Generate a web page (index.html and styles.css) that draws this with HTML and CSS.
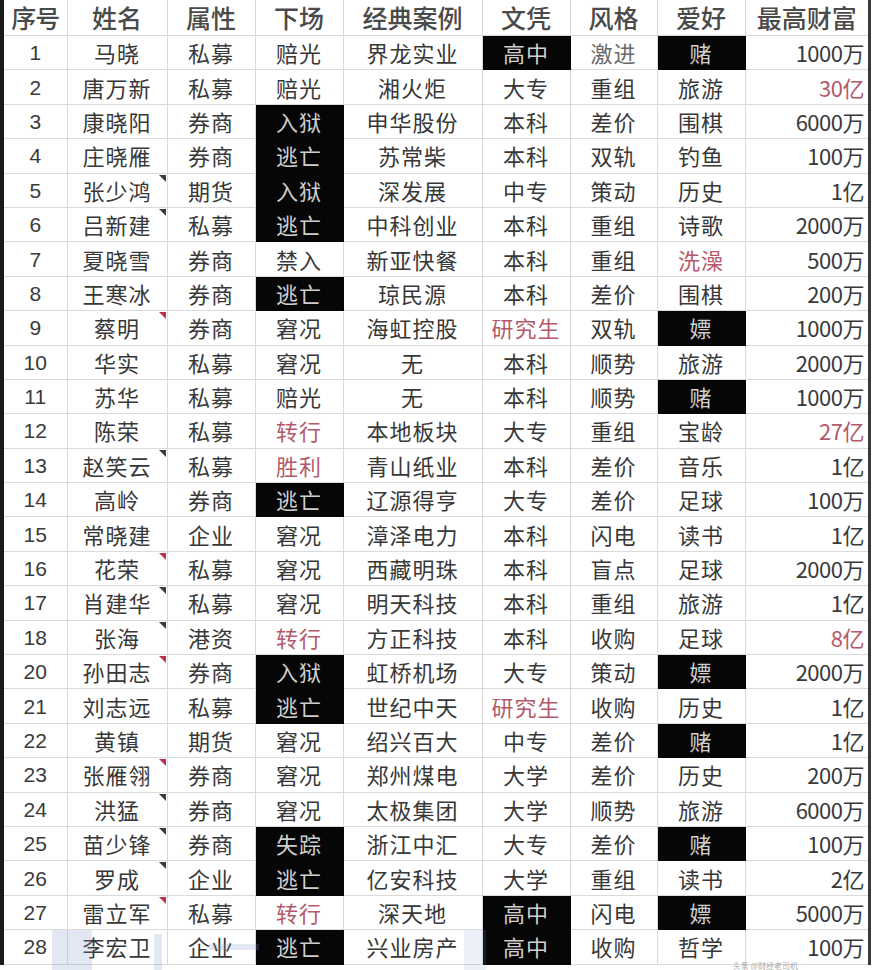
FILE: index.html
```html
<!DOCTYPE html>
<html lang="zh">
<head>
<meta charset="utf-8">
<link rel="stylesheet" href="styles.css">
</head>
<body>
<div class="sheet">
<table class="grid">
<colgroup>
<col class="c-no"><col class="c-name"><col class="c-type"><col class="c-end"><col class="c-case"><col class="c-edu"><col class="c-style"><col class="c-hobby"><col class="c-max">
</colgroup>
<thead>
<tr><th>序号</th><th>姓名</th><th>属性</th><th>下场</th><th>经典案例</th><th>文凭</th><th>风格</th><th>爱好</th><th>最高财富</th></tr>
</thead>
<tbody>
<tr><td class="no">1</td><td>马晓</td><td>私募</td><td>赔光</td><td>界龙实业</td><td class="blk">高中</td><td class="lt">激进</td><td class="blk">赌</td><td class="num">1000万</td></tr>
<tr><td class="no">2</td><td>唐万新</td><td>私募</td><td>赔光</td><td>湘火炬</td><td>大专</td><td>重组</td><td>旅游</td><td class="num red">30亿</td></tr>
<tr><td class="no">3</td><td>康晓阳</td><td>券商</td><td class="blk">入狱</td><td>申华股份</td><td>本科</td><td>差价</td><td>围棋</td><td class="num">6000万</td></tr>
<tr><td class="no">4</td><td>庄晓雁</td><td>券商</td><td class="blk">逃亡</td><td>苏常柴</td><td>本科</td><td>双轨</td><td>钓鱼</td><td class="num">100万</td></tr>
<tr><td class="no">5</td><td class="note">张少鸿</td><td>期货</td><td class="blk">入狱</td><td>深发展</td><td>中专</td><td>策动</td><td>历史</td><td class="num">1亿</td></tr>
<tr><td class="no">6</td><td class="note">吕新建</td><td>私募</td><td class="blk">逃亡</td><td>中科创业</td><td>本科</td><td>重组</td><td>诗歌</td><td class="num">2000万</td></tr>
<tr><td class="no">7</td><td>夏晓雪</td><td>券商</td><td>禁入</td><td>新亚快餐</td><td>本科</td><td>重组</td><td class="red">洗澡</td><td class="num">500万</td></tr>
<tr><td class="no">8</td><td>王寒冰</td><td>券商</td><td class="blk">逃亡</td><td>琼民源</td><td>本科</td><td>差价</td><td>围棋</td><td class="num">200万</td></tr>
<tr><td class="no">9</td><td class="note rednote">蔡明</td><td>券商</td><td>窘况</td><td>海虹控股</td><td class="red">研究生</td><td>双轨</td><td class="blk">嫖</td><td class="num">1000万</td></tr>
<tr><td class="no">10</td><td>华实</td><td>私募</td><td>窘况</td><td>无</td><td>本科</td><td>顺势</td><td>旅游</td><td class="num">2000万</td></tr>
<tr><td class="no">11</td><td>苏华</td><td>私募</td><td>赔光</td><td>无</td><td>本科</td><td>顺势</td><td class="blk">赌</td><td class="num">1000万</td></tr>
<tr><td class="no">12</td><td>陈荣</td><td>私募</td><td class="red">转行</td><td>本地板块</td><td>大专</td><td>重组</td><td>宝龄</td><td class="num red">27亿</td></tr>
<tr><td class="no">13</td><td class="note">赵笑云</td><td>私募</td><td class="red">胜利</td><td>青山纸业</td><td>本科</td><td>差价</td><td>音乐</td><td class="num">1亿</td></tr>
<tr><td class="no">14</td><td>高岭</td><td>券商</td><td class="blk">逃亡</td><td>辽源得亨</td><td>大专</td><td>差价</td><td>足球</td><td class="num">100万</td></tr>
<tr><td class="no">15</td><td>常晓建</td><td>企业</td><td>窘况</td><td>漳泽电力</td><td>本科</td><td>闪电</td><td>读书</td><td class="num">1亿</td></tr>
<tr><td class="no">16</td><td class="note rednote">花荣</td><td>私募</td><td>窘况</td><td>西藏明珠</td><td>本科</td><td>盲点</td><td>足球</td><td class="num">2000万</td></tr>
<tr><td class="no">17</td><td class="note">肖建华</td><td>私募</td><td>窘况</td><td>明天科技</td><td>本科</td><td>重组</td><td>旅游</td><td class="num">1亿</td></tr>
<tr><td class="no">18</td><td class="note">张海</td><td>港资</td><td class="red">转行</td><td>方正科技</td><td>本科</td><td>收购</td><td>足球</td><td class="num red">8亿</td></tr>
<tr><td class="no">20</td><td class="note rednote">孙田志</td><td>券商</td><td class="blk">入狱</td><td>虹桥机场</td><td>大专</td><td>策动</td><td class="blk">嫖</td><td class="num">2000万</td></tr>
<tr><td class="no">21</td><td>刘志远</td><td>私募</td><td class="blk">逃亡</td><td>世纪中天</td><td class="red">研究生</td><td>收购</td><td>历史</td><td class="num">1亿</td></tr>
<tr><td class="no">22</td><td>黄镇</td><td>期货</td><td>窘况</td><td>绍兴百大</td><td>中专</td><td>差价</td><td class="blk">赌</td><td class="num">1亿</td></tr>
<tr><td class="no">23</td><td class="note rednote">张雁翎</td><td>券商</td><td>窘况</td><td>郑州煤电</td><td>大学</td><td>差价</td><td>历史</td><td class="num">200万</td></tr>
<tr><td class="no">24</td><td class="note">洪猛</td><td>券商</td><td>窘况</td><td>太极集团</td><td>大学</td><td>顺势</td><td>旅游</td><td class="num">6000万</td></tr>
<tr><td class="no">25</td><td class="note">苗少锋</td><td>券商</td><td class="blk">失踪</td><td>浙江中汇</td><td>大专</td><td>差价</td><td class="blk">赌</td><td class="num">100万</td></tr>
<tr><td class="no">26</td><td class="note">罗成</td><td>企业</td><td class="blk">逃亡</td><td>亿安科技</td><td>大学</td><td>重组</td><td>读书</td><td class="num">2亿</td></tr>
<tr><td class="no">27</td><td class="note rednote">雷立军</td><td>私募</td><td class="red">转行</td><td>深天地</td><td class="blk">高中</td><td>闪电</td><td class="blk">嫖</td><td class="num">5000万</td></tr>
<tr><td class="no">28</td><td>李宏卫</td><td>企业</td><td class="blk">逃亡</td><td>兴业房产</td><td class="blk">高中</td><td>收购</td><td>哲学</td><td class="num">100万</td></tr>
</tbody>
</table>
<div class="wm wm-a"></div>
<div class="wm wm-b"></div>
<div class="wm wm-c"></div>
<div class="wm wm-d"></div>
<div class="wm-small">头条 @财经老司机</div>
</div>
</body>
</html>
```
FILE: styles.css
```css
html, body {
  margin: 0;
  padding: 0;
  background: #ffffff;
}
body {
  width: 874px;
  height: 970px;
  overflow: hidden;
  font-family: "Noto Sans CJK SC", "Noto Sans", sans-serif;
}
.sheet {
  position: relative;
  width: 864px;
  border-left: 4px solid #1a1a1a;
  border-right: 3px solid #3a3a3a;
  background: #fff;
}
.grid {
  width: 864px;
  table-layout: fixed;
  border-collapse: collapse;
}
.c-no { width: 63px; }
.c-name { width: 100px; }
.c-type { width: 88px; }
.c-end { width: 88px; }
.c-case { width: 139px; }
.c-edu { width: 88px; }
.c-style { width: 87px; }
.c-hobby { width: 88px; }
.c-max { width: 123px; }

.grid th {
  height: 35px;
  padding: 0;
  font-weight: 500;
  font-size: 25px;
  line-height: 35px;
  color: #4a4a4a;
  text-align: center;
  border: 1px solid #d6d6d6;
  border-top: none;
  white-space: nowrap;
  overflow: hidden;
}
.grid th:first-child { border-left: none; letter-spacing: -1px; }
.grid th:last-child { border-right: none; }

.grid td {
  height: 33.4px;
  padding: 0;
  font-size: 22px;
  line-height: 33px;
  color: #383838;
  text-align: center;
  letter-spacing: 1px;
  border: 1px solid #dadada;
  white-space: nowrap;
  overflow: hidden;
}
.grid td:first-child { border-left: none; }
.grid td:last-child { border-right: none; }

.grid td.no {
  font-family: "Liberation Sans", Arial, sans-serif;
  font-size: 21px;
  letter-spacing: 0;
  color: #3a3a3a;
}
.grid td.num {
  text-align: right;
  padding-right: 4px;
  letter-spacing: -0.5px;
  font-size: 22px;
  color: #3a3a3a;
}
.grid td.lt { color: #6a6a6a; }
.grid td.red { color: #b5596a; }
.grid td.blk {
  background: #060606;
  color: #cfcfcf;
  border-color: #060606;
}
.grid td.note { position: relative; }
.grid td.note::after {
  content: "";
  position: absolute;
  top: 1px;
  right: 1px;
  width: 0;
  height: 0;
  border-top: 7px solid #3c3c3c;
  border-left: 7px solid transparent;
}
.grid td.rednote::after { border-top-color: #b8304c; }

.wm {
  position: absolute;
  background: rgba(120, 150, 205, 0.22);
  pointer-events: none;
}
.wm-a { left: 48px; top: 930px; width: 40px; height: 40px; }
.wm-b { left: 150px; top: 934px; width: 8px; height: 36px; }
.wm-c { left: 205px; top: 944px; width: 50px; height: 6px; }
.wm-d { left: 460px; top: 930px; width: 22px; height: 40px; background: rgba(120, 150, 205, 0.14); }
.wm-small {
  position: absolute;
  right: 70px;
  top: 962px;
  font-size: 8px;
  line-height: 8px;
  color: rgba(90, 90, 90, 0.55);
}
```
